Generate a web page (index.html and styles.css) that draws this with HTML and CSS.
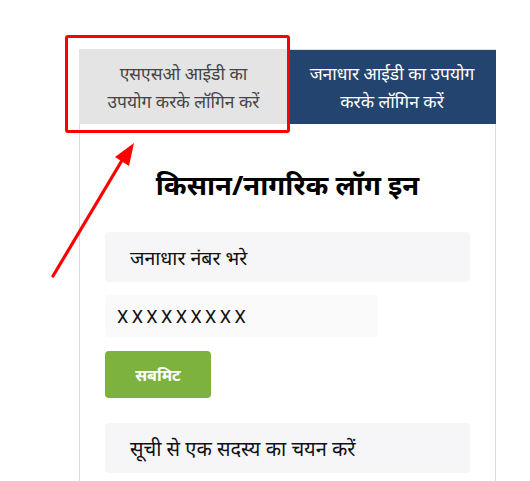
FILE: index.html
```html
<!DOCTYPE html>
<html lang="hi">
<head>
<meta charset="utf-8">
<title>किसान/नागरिक लॉग इन</title>
<link rel="stylesheet" href="styles.css">
</head>
<body>
<div class="page">
  <div class="card">
    <div class="tabs">
      <div class="tab tab-sso">एसएसओ आईडी का<br>उपयोग करके लॉगिन करें</div>
      <div class="tab tab-jan">जनाधार आईडी का उपयोग<br>करके लॉगिन करें</div>
    </div>
    <div class="body">
      <h1 class="title">किसान/नागरिक लॉग इन</h1>
      <div class="field field-wide field-jan">जनाधार नंबर भरे</div>
      <div class="field field-short">XXXXXXXXX</div>
      <button class="submit">सबमिट</button>
      <div class="field field-wide field-select">सूची से एक सदस्य का चयन करें</div>
    </div>
  </div>
  <div class="highlight"></div>
  <svg class="arrow" width="530" height="481" viewBox="0 0 530 481">
    <line x1="53" y1="276" x2="124" y2="157" stroke="#ff0000" stroke-width="3.2" stroke-linecap="round"/>
    <polygon points="134,143 115,157 129,166" fill="#ff0000"/>
  </svg>
</div>
</body>
</html>
```
FILE: styles.css
```css
* { box-sizing: border-box; }
html, body { margin: 0; padding: 0; background: #ffffff; }
body {
  font-family: "Noto Sans", "Noto Sans Devanagari", "Lohit Devanagari", sans-serif;
  width: 530px;
  height: 481px;
  overflow: hidden;
}
.page {
  position: relative;
  width: 530px;
  height: 481px;
  padding: 49px 34px 0 79px;
}
.card {
  width: 417px;
  height: 432px;
  border: 1px solid #dcdcdc;
  border-bottom: none;
}
.tabs {
  display: flex;
  height: 75px;
  margin: -1px -1px 0 -1px;
}
.tab {
  display: flex;
  align-items: center;
  justify-content: center;
  text-align: center;
  font-size: 17.4px;
  line-height: 28px;
}
.tab-sso {
  width: 209px;
  background: #e4e4e4;
  color: #444444;
}
.tab-jan {
  flex: 1;
  background: #22446e;
  color: #ffffff;
  margin-top: 1px;
}
.body {
  padding: 0 25px;
  display: flex;
  flex-direction: column;
  align-items: flex-start;
}
.title {
  align-self: stretch;
  text-align: center;
  font-size: 27.5px;
  font-weight: 700;
  color: #000000;
  margin: 41px 0 0 0;
  line-height: 40px;
  height: 67px;
}
.field {
  border-radius: 4px;
  display: flex;
  align-items: center;
  color: #111111;
  font-size: 18px;
  flex-shrink: 0;
}
.field-wide {
  width: 365px;
  height: 50px;
  background: #f6f6f8;
  padding-left: 25px;
}
.field-jan {
  font-size: 19.5px;
}
.field-short {
  width: 273px;
  height: 42px;
  background: #fafafa;
  padding-left: 12px;
  margin-top: 13px;
  letter-spacing: 3.4px;
  font-family: Roboto, "Noto Sans", sans-serif;
}
.submit {
  margin-top: 14px;
  width: 106px;
  height: 47px;
  flex-shrink: 0;
  border: none;
  border-radius: 4px;
  background: #7db23f;
  color: #ffffff;
  font-family: inherit;
  font-size: 16px;
  font-weight: 700;
  padding: 0;
}
.field-select {
  margin-top: 25px;
  font-size: 20px;
}
.highlight {
  position: absolute;
  left: 65px;
  top: 35px;
  width: 225px;
  height: 98px;
  border: 3px solid #ff0000;
  border-radius: 3px;
}
.arrow {
  position: absolute;
  left: 0;
  top: 0;
}
```
